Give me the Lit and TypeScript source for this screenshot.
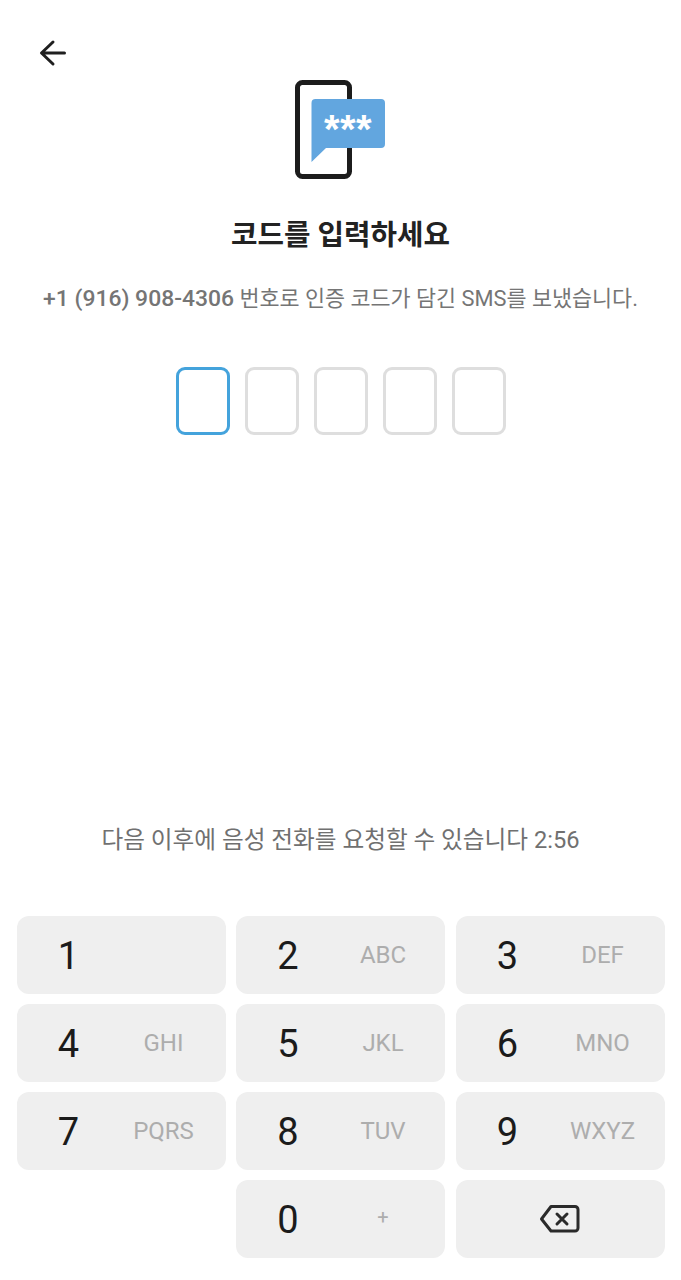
import { LitElement, html, css, svg } from "lit";
import { customElement } from "lit/decorators.js";

const KEYS: [string, string][] = [
  ["1", ""], ["2", "ABC"], ["3", "DEF"],
  ["4", "GHI"], ["5", "JKL"], ["6", "MNO"],
  ["7", "PQRS"], ["8", "TUV"], ["9", "WXYZ"],
];

@customElement("app-root")
export class AppRoot extends LitElement {
  static styles = css`
    :host {
      display: block;
      width: 681px;
      height: 1280px;
      background: #fff;
      font-family: Roboto, "Noto Sans CJK KR", sans-serif;
      overflow: hidden;
    }
    .page {
      display: flex;
      flex-direction: column;
      height: 1280px;
      box-sizing: border-box;
      padding-top: 38px;
    }
    .top {
      display: grid;
      grid-template-columns: 1fr auto 1fr;
      padding-left: 38px;
      height: 141px;
    }
    .back { display: block; width: 30px; height: 30px; }
    .hero { display: block; width: 92px; height: 101px; margin: 42px 0 0 -38px; }
    .title {
      margin: 38px 0 0;
      text-align: center;
      font-size: 28.8px;
      line-height: 36px;
      font-weight: 600;
      color: #222;
    }
    .sub {
      margin: 31px 0 0;
      text-align: center;
      font-size: 21.8px;
      line-height: 30px;
      color: #757575;
      white-space: nowrap;
    }
    .sub b { font-weight: 500; font-size: 22.9px; }
    .cells {
      display: flex;
      justify-content: center;
      gap: 15px;
      margin-top: 53px;
    }
    .cell {
      width: 54px;
      height: 68px;
      box-sizing: border-box;
      border: 3px solid #dedede;
      border-radius: 9px;
    }
    .cell.on { border-color: #44a3dc; }
    .timer {
      margin: 389px 0 0;
      text-align: center;
      font-size: 23.65px;
      line-height: 32px;
      color: #707070;
    }
    .pad {
      display: grid;
      grid-template-columns: repeat(3, 209px);
      grid-auto-rows: 77.5px;
      column-gap: 10.5px;
      row-gap: 10.5px;
      margin: 60px 0 0 16.5px;
    }
    .key {
      display: grid;
      grid-template-columns: 104px 86px;
      align-items: center;
      background: #efefef;
      border-radius: 12px;
      text-align: center;
    }
    .num { font-size: 38px; color: #1b1b1b; line-height: 1; padding-top: 3px; }
    .let { font-size: 24px; color: #adadad; padding-top: 1px; }
    .let.plus { font-size: 20px; padding: 0 0 3px; }
    .key.del { display: flex; justify-content: center; }
    .del svg { display: block; width: 42px; height: 32px; }
    .blank { background: none; }
  `;

  render() {
    return html`<div class="page">
      <div class="top">
        <svg class="back" viewBox="0 0 30 30" fill="none" stroke="#1f1f1f" stroke-width="3" stroke-linecap="round" stroke-linejoin="round">
          <path d="M4 15H26.5M15 4L3.5 15L15 26"></path>
        </svg>
        <svg class="hero" viewBox="0 0 92 101">
          <rect x="2.5" y="2.5" width="52" height="94" rx="5" fill="#fff" stroke="#1c1c1c" stroke-width="5"></rect>
          <path d="M20.5 19H86a4 4 0 0 1 4 4V64a4 4 0 0 1-4 4H31L16.5 82V23a4 4 0 0 1 4-4Z" fill="#62a6df"></path>
          <text x="53" y="63" text-anchor="middle" letter-spacing="0.5" font-family="'Liberation Sans', sans-serif" font-weight="700" font-size="40" fill="#fff">***</text>
        </svg>
        <span></span>
      </div>
      <h1 class="title">코드를 입력하세요</h1>
      <p class="sub"><b>+1 (916) 908-4306</b> 번호로 인증 코드가 담긴 SMS를 보냈습니다.</p>
      <div class="cells">
        ${[0, 1, 2, 3, 4].map((i) => html`<div class="cell ${i === 0 ? "on" : ""}"></div>`)}
      </div>
      <p class="timer">다음 이후에 음성 전화를 요청할 수 있습니다 2:56</p>
      <div class="pad">
        ${KEYS.map(([n, l]) => html`<div class="key"><span class="num">${n}</span><span class="let">${l}</span></div>`)}
        <div class="blank"></div>
        <div class="key"><span class="num">0</span><span class="let plus">+</span></div>
        <div class="key del">
          <svg viewBox="0 0 42 32" fill="none" stroke="#2a2a2a" stroke-width="3" stroke-linecap="round" stroke-linejoin="round">
            ${svg`<path d="M12 3.5H36a3 3 0 0 1 3 3V25a3 3 0 0 1-3 3H12L2.5 16Z"></path>
            <path d="M18 11L28 21M28 11L18 21"></path>`}
          </svg>
        </div>
      </div>
    </div>`;
  }
}
